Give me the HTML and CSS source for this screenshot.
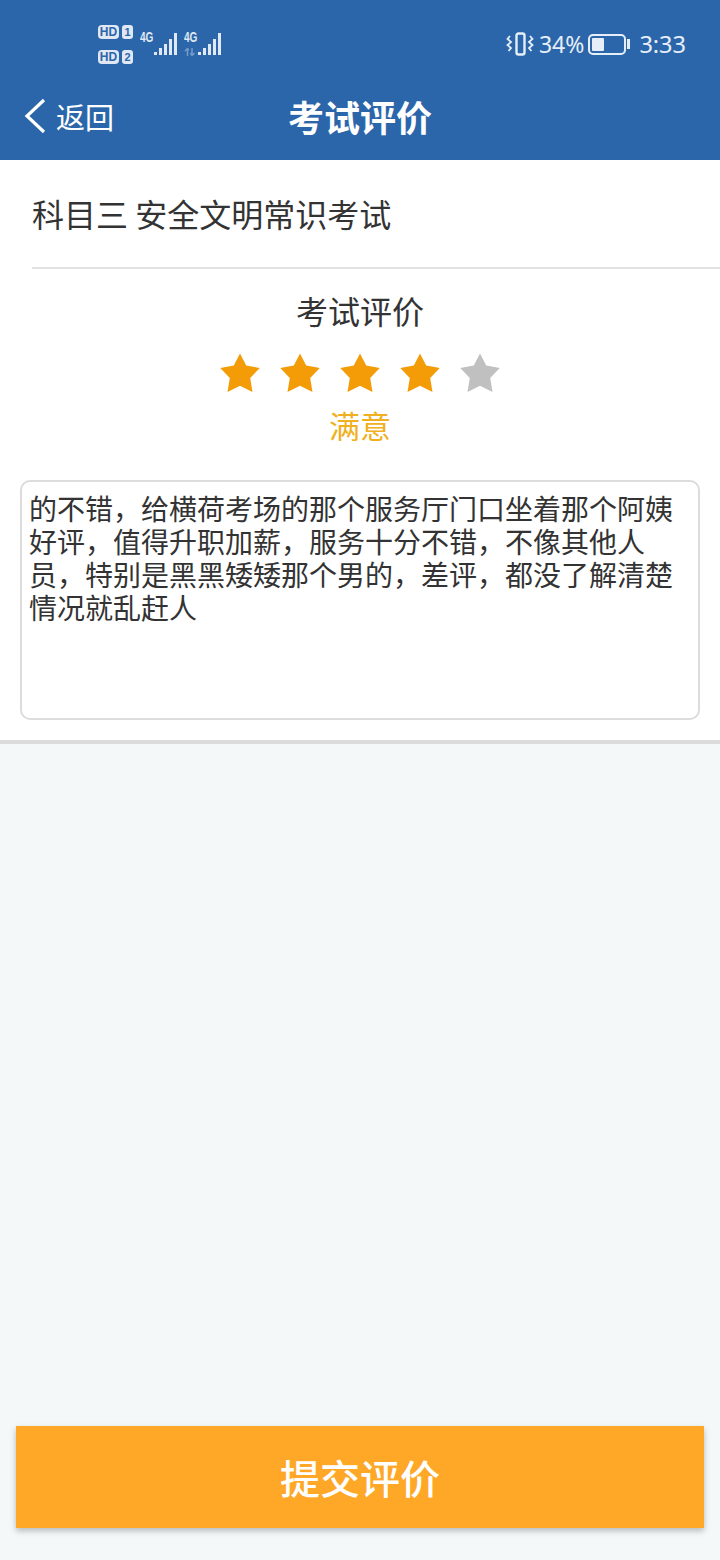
FILE: index.html
```html
<!DOCTYPE html>
<html lang="zh-CN">
<head>
    <meta charset="UTF-8" />
    <meta name="viewport" content="width=device-width, initial-scale=1.0" />
    <title>考试评价</title>
    <link rel="stylesheet" href="styles.css">
</head>
<body>
    <svg class="defs" width="0" height="0">
        <symbol id="star" viewBox="0 0 40 40">
            <path d="M20 0.500 L26.200 12.600 L39.800 15 L30.200 25 L32.500 39 L20 32.800 L7.500 39 L9.800 25 L0.200 15 L13.800 12.600 Z" />
        </symbol>
    </svg>

    <header class="top">
        <div class="status-bar">
            <div class="status-left">
                <div class="hd-group">
                    <div class="hd-row"><span class="hd">HD</span><span class="sim">1</span></div>
                    <div class="hd-row"><span class="hd">HD</span><span class="sim">2</span></div>
                </div>
                <div class="signal">
                    <div class="net"><span class="net-label">4G</span></div>
                    <div class="bars">
                        <i class="b1"></i><i class="b2"></i><i class="b3"></i><i class="b4"></i><i class="b5"></i>
                    </div>
                </div>
                <div class="signal">
                    <div class="net">
                        <span class="net-label">4G</span>
                        <svg class="arrows" width="12" height="8" viewBox="0 0 12 8" fill="none" stroke="#dfe8f3" stroke-width="1.500">
                            <path d="M3.500 8 V1 M1 3 L3.500 0.500 L5 2 M8 0 V7 M6.500 5 L8 7.500 L10.500 5" />
                        </svg>
                    </div>
                    <div class="bars">
                        <i class="b1"></i><i class="b2"></i><i class="b3"></i><i class="b4"></i><i class="b5"></i>
                    </div>
                </div>
            </div>
            <div class="status-right">
                <svg class="vibrate" width="28" height="24" viewBox="0 0 28 24" fill="none" stroke="#e6eef8">
                    <rect x="10.500" y="1.500" width="8" height="21" rx="2" stroke-width="2.400" />
                    <path d="M4 4 L1.500 7 L5 10 L1.500 13 L5 16 L2.500 19" stroke-width="1.800" />
                    <path d="M24 4 L26.500 7 L23 10 L26.500 13 L23 16 L25.500 19" stroke-width="1.800" />
                </svg>
                <span class="pct">34%</span>
                <div class="battery">
                    <div class="battery-body"><div class="battery-level"></div></div>
                    <div class="battery-cap"></div>
                </div>
                <span class="clock">3:33</span>
            </div>
        </div>
        <nav class="nav-bar">
            <a class="back" href="#">
                <svg width="22" height="36" viewBox="0 0 22 36" fill="none" stroke="#ffffff" stroke-width="3.200">
                    <path d="M20 2 L3 18 L20 34" />
                </svg>
                <span>返回</span>
            </a>
            <h1>考试评价</h1>
        </nav>
    </header>

    <main class="content">
        <section class="panel">
            <div class="exam-name">科目三 安全文明常识考试</div>
            <div class="rating">
                <h2>考试评价</h2>
                <div class="stars">
                    <svg class="star on"><use href="#star" /></svg>
                    <svg class="star on"><use href="#star" /></svg>
                    <svg class="star on"><use href="#star" /></svg>
                    <svg class="star on"><use href="#star" /></svg>
                    <svg class="star off"><use href="#star" /></svg>
                </div>
                <div class="rating-label">满意</div>
            </div>
            <div class="comment">的不错，给横荷考场的那个服务厅门口坐着那个阿姨好评，值得升职加薪，服务十分不错，不像其他人员，特别是黑黑矮矮那个男的，差评，都没了解清楚情况就乱赶人</div>
        </section>
        <div class="submit-wrap">
            <button class="submit">提交评价</button>
        </div>
    </main>
</body>
</html>
```

FILE: styles.css
```css
* {
    box-sizing: border-box;
}

html, body {
    height: 100%;
}

body {
    margin: 0;
    display: flex;
    flex-direction: column;
    min-height: 1560px;
    font-family: "Noto Sans CJK SC", "Noto Sans", sans-serif;
    background-color: #f4f8f9;
    color: #333;
}

.defs {
    display: none;
}

.top {
    background-color: #2c66aa;
    color: white;
}

.status-bar {
    height: 88px;
    padding: 25px 34px 0 98px;
    display: flex;
    justify-content: space-between;
    align-items: flex-start;
}

.status-left {
    display: flex;
    align-items: flex-start;
}

.hd-group {
    width: 42px;
    display: flex;
    flex-direction: column;
    gap: 11px;
}

.hd-row {
    display: flex;
    gap: 3px;
}

.hd {
    width: 21px;
    height: 14px;
    background-color: #dfe8f3;
    color: #2c66aa;
    border-radius: 4px;
    font: bold 12px/14px "Liberation Sans", sans-serif;
    text-align: center;
}

.sim {
    width: 11px;
    height: 14px;
    background-color: #dfe8f3;
    color: #2c66aa;
    border-radius: 3px;
    font: bold 11px/14px "Liberation Sans", sans-serif;
    text-align: center;
}

.signal {
    width: 44px;
    height: 30px;
    display: flex;
    align-items: flex-start;
}

.net {
    width: 14px;
    padding-top: 6px;
    display: flex;
    flex-direction: column;
    font: bold 14px/13px "Liberation Sans", sans-serif;
    color: #dfe8f3;
}

.net-label {
    display: block;
    transform: scaleX(0.72);
    transform-origin: left center;
    white-space: nowrap;
}

.arrows {
    margin-top: 4px;
    opacity: 0.4;
}

.bars {
    height: 22px;
    margin-top: 8px;
    display: flex;
    align-items: flex-end;
    gap: 2px;
}

.bars i {
    display: block;
    width: 3px;
    background-color: #dfe8f3;
}

.b1 { height: 3px; }
.b2 { height: 7px; }
.b3 { height: 11px; }
.b4 { height: 16px; }
.b5 { height: 22px; }

.status-right {
    display: flex;
    align-items: center;
    height: 42px;
    margin-top: -2px;
    color: #e6eef8;
}

.pct {
    font: 23px "Noto Sans", sans-serif;
    margin-left: 5px;
}

.battery {
    display: flex;
    align-items: center;
    margin-left: 4px;
}

.battery-body {
    width: 38px;
    height: 21px;
    border: 2px solid #e6eef8;
    border-radius: 5px;
    padding: 2px;
}

.battery-level {
    width: 12px;
    height: 100%;
    background-color: #e6eef8;
    border-radius: 1px;
}

.battery-cap {
    width: 3px;
    height: 10px;
    margin-left: 1px;
    background-color: #e6eef8;
}

.clock {
    font: 23.500px "Noto Sans", sans-serif;
    margin-left: 9px;
}

.nav-bar {
    position: relative;
    height: 72px;
    display: flex;
    align-items: center;
    justify-content: center;
}

.nav-bar h1 {
    margin: 0 0 16px;
    font-size: 36px;
    font-weight: bold;
    line-height: 44px;
}

.back {
    position: absolute;
    left: 24px;
    top: 10px;
    display: flex;
    align-items: center;
    gap: 10px;
    color: white;
    text-decoration: none;
    font-size: 29px;
    line-height: 36px;
}

.content {
    flex: 1;
    display: flex;
    flex-direction: column;
    justify-content: space-between;
}

.panel {
    background-color: white;
    padding-bottom: 20px;
    border-bottom: 4px solid #dcdcdc;
}

.exam-name {
    height: 109px;
    margin-left: 32px;
    padding-top: 30px;
    font-size: 32px;
    line-height: 46px;
    border-bottom: 2px solid #e2e2e2;
}

.rating {
    text-align: center;
}

.rating h2 {
    margin: 0;
    padding-top: 19px;
    font-size: 32px;
    font-weight: normal;
    line-height: 44px;
}

.stars {
    margin-top: 21px;
    display: flex;
    justify-content: center;
    gap: 20px;
}

.star {
    width: 40px;
    height: 40px;
}

.star.on {
    fill: #f39c07;
}

.star.off {
    fill: #c0c0c0;
}

.rating-label {
    margin-top: 10px;
    color: #f0b020;
    font-size: 31px;
    line-height: 44px;
}

.comment {
    height: 240px;
    margin: 33px 20px 0;
    padding: 10px 7px;
    border: 2px solid #dcdcdc;
    border-radius: 10px;
    font-size: 28px;
    line-height: 33px;
}

.submit-wrap {
    padding: 0 16px 32px;
}

.submit {
    display: block;
    width: 100%;
    height: 102px;
    border: none;
    background-color: #ffa726;
    color: white;
    font-family: inherit;
    font-size: 40px;
    font-weight: 500;
    box-shadow: 0 3px 6px rgba(0, 0, 0, 0.25);
}
```
